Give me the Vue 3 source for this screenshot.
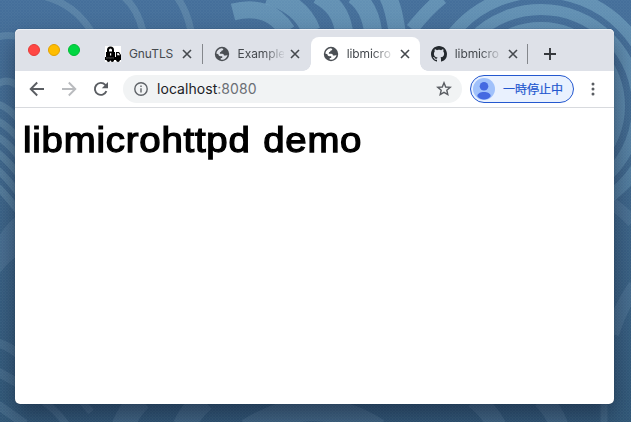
<script setup>
const tabs = [
  { title: 'GnuTLS', icon: 'truck', active: false, separator: true, fade: false },
  { title: 'Example', icon: 'globe', active: false, separator: false, fade: true },
  { title: 'libmicro', icon: 'globe', active: true, separator: false, fade: true },
  { title: 'libmicro', icon: 'github', active: false, separator: true, fade: true },
]
const lights = ['red', 'yellow', 'green']
</script>

<template>
  <div class="desktop">
    <svg class="wallpaper" width="631" height="422" viewBox="0 0 631 422">
      <defs>
        <linearGradient id="sea" x1="0" y1="0" x2="0" y2="1">
          <stop offset="0" stop-color="#456f9b" />
          <stop offset="0.3" stop-color="#41698f" />
          <stop offset="1" stop-color="#315777" />
        </linearGradient>
        <linearGradient id="foam" gradientUnits="userSpaceOnUse" x1="0" y1="0" x2="0" y2="180">
          <stop offset="0" stop-color="#7fb0cb" stop-opacity=".52" />
          <stop offset="1" stop-color="#7fb0cb" stop-opacity=".3" />
        </linearGradient>
        <pattern id="weave" width="3" height="3" patternUnits="userSpaceOnUse">
          <path d="M0 .5H2M2.5 1V3" stroke="#b9d4e4" stroke-opacity=".05" fill="none" />
        </pattern>
      </defs>
      <rect width="631" height="422" fill="url(#sea)" />
      <g fill="none" stroke="url(#foam)">
        <circle cx="541" cy="106" r="63" stroke-width="42" />
        <circle cx="541" cy="106" r="96.5" stroke-width="11" />
        <circle cx="541" cy="106" r="114" stroke-width="12" />
        <path d="M412 29Q428 9 442 -2" stroke-width="13" />
        <path d="M233 12C256 6 275 12 287 31" stroke-width="17" />
        <path d="M268 -5C291 2 305 14 311 31" stroke-width="19" />
        <path d="M318 -5C334 4 341 14 344 31" stroke-width="18" />
        <path d="M354 -5C366 4 371 16 373 31" stroke-width="18" />
        <path d="M387 -5C393 6 395 18 397 31" stroke-width="17" />
      </g>
      <g fill="none" stroke="#89afc5" stroke-opacity=".3" stroke-width="7">
        <path d="M46 -3Q75 5 91 31" />
        <path d="M124 -3Q137 8 143 31" />
        <path d="M177 -3Q187 11 191 31" />
        <path d="M-2 37Q8 34 19 37" />
        <path d="M-2 84Q8 77 19 87" />
        <path d="M-2 104Q8 107 19 120" />
        <path d="M-2 121Q8 126 19 139" />
        <path d="M-2 137Q8 143 19 157" />
        <path d="M-2 153Q8 161 19 175" />
        <path d="M-2 170Q8 179 19 194" />
        <path d="M-2 187Q8 197 19 212" />
      </g>
      <g fill="none" stroke="#7698b2" stroke-opacity=".24">
        <path d="M-2 238Q7 222 19 215V255Q8 261-2 276Z" fill="#7698b2" fill-opacity=".24" stroke="none" />
        <path d="M-2 343Q9 346 19 355M-2 372Q9 378 19 384M-2 405L25 424" stroke-width="9" />
        <path d="M44 402Q56 410 66 424M79 398L91 412" stroke-width="7" />
        <path d="M141 399Q130 409 123 426M204 400Q191 411 184 426" stroke-width="23" />
        <path d="M248 430Q313 389 378 430" stroke-width="23" />
        <path d="M474 399Q488 409 497 426M542 399Q554 411 559 426" stroke-width="19" />
        <path d="M604 399V424" stroke-width="7" />
        <path d="M612 204Q622 210 633 222" stroke-width="12" />
        <path d="M612 334Q620 308 635 286" stroke-width="14" />
      </g>
      <rect width="631" height="422" fill="url(#weave)" />
    </svg>

    <main class="window">
      <header class="tabstrip">
        <div class="lights">
          <span v-for="light in lights" :key="light" class="light" :class="light"></span>
        </div>
        <div class="tabs">
          <div v-for="(tab, i) in tabs" :key="i" class="tab" :class="{ active: tab.active, separated: tab.separator }">
            <svg v-if="tab.icon === 'truck'" class="favicon" viewBox="0 0 16 16">
              <path fill="#fff" d="M0 0h16v16H0z" />
              <path d="M1 6h9v5H1zM2 6V4a3.5 3.5 0 0 1 7 0v2" fill="#000" />
              <path d="M4 5.4V4a1.5 1.5 0 0 1 3 0v1.4z" fill="#fff" />
              <path d="M0 11h11V6h3l2 3v5H0z" />
              <path d="M12.2 7h1.2L15 9.3h-2.8zM5 7.2h1.2v2.4H5z" fill="#fff" />
              <path d="M1 12h8" stroke="#777" stroke-width=".7" />
              <circle cx="3.5" cy="14.2" r="1.7" /><circle cx="7.3" cy="14.2" r="1.7" /><circle cx="13" cy="14.2" r="1.7" />
            </svg>
            <svg v-else-if="tab.icon === 'globe'" class="favicon" viewBox="0 0 16 16">
              <circle cx="8" cy="8" r="7.2" fill="#4b4f54" />
              <path d="M2.3 7.6C2.6 4.7 4.9 2.5 7.8 2.3L9.4 3Q9.3 4.5 7.5 4.8 7.6 6.2 6 6.3L5.8 7.7H8.4Q10 7.9 10 9.4H11.8Q13 9.3 13.5 8.7C13.2 11.6 10.9 13.7 8 13.8L6.7 13.6V12H8.2V10.2H6.3Q4.6 10.2 4.3 8.2Z" :fill="tab.active ? '#fff' : '#dee1e8'" />
            </svg>
            <svg v-else class="favicon" viewBox="0 0 16 16">
              <path fill="#24292e" fill-rule="evenodd" d="M8 0C3.58 0 0 3.58 0 8c0 3.54 2.29 6.53 5.47 7.59.4.07.55-.17.55-.38 0-.19-.01-.82-.01-1.49-2.01.37-2.53-.49-2.69-.94-.09-.23-.48-.94-.82-1.13-.28-.15-.68-.52-.01-.53.63-.01 1.08.58 1.23.82.72 1.21 1.87.87 2.33.66.07-.52.28-.87.51-1.07-1.78-.2-3.64-.89-3.64-3.95 0-.87.31-1.59.82-2.15-.08-.2-.36-1.02.08-2.12 0 0 .67-.21 2.2.82.64-.18 1.32-.27 2-.27s1.36.09 2 .27c1.53-1.04 2.2-.82 2.2-.82.44 1.1.16 1.92.08 2.12.51.56.82 1.27.82 2.15 0 3.07-1.87 3.75-3.65 3.95.29.25.54.73.54 1.48 0 1.07-.01 1.93-.01 2.2 0 .21.15.46.55.38A8.01 8.01 0 0 0 16 8c0-4.42-3.58-8-8-8z" />
            </svg>
            <span class="title" :class="{ fade: tab.fade }">{{ tab.title }}</span>
            <svg class="close" viewBox="0 0 10 10"><path d="M1 1l8 8M9 1L1 9" /></svg>
          </div>
        </div>
        <svg class="plus" viewBox="0 0 12 12"><path d="M6 0v12M0 6h12" /></svg>
      </header>

      <nav class="toolbar">
        <svg class="nav" viewBox="0 0 16 16"><path d="M15 8H2M8.2 1.5L1.7 8l6.5 6.5" /></svg>
        <svg class="nav disabled" viewBox="0 0 16 16"><path d="M1 8h13M7.8 1.5L14.3 8l-6.5 6.5" /></svg>
        <svg class="nav" viewBox="0 0 16 16">
          <path d="M13.4 10.2A6 6 0 1 1 12.3 3.8L14 5.5" />
          <path class="solid" d="M15 1v6.2H8.8z" />
        </svg>
        <div class="omnibox">
          <svg class="info" viewBox="0 0 14 14">
            <circle cx="7" cy="7" r="6.2" /><path d="M7 6.2v4.3M7 3.5V5" />
          </svg>
          <span class="url">localhost<span class="port">:8080</span></span>
          <svg class="star" viewBox="0 0 16 16">
            <path d="M8 1.8l1.7 4.2 4.5.3-3.4 2.9 1 4.4L8 11.3l-3.8 2.3 1-4.4-3.4-2.9 4.5-.3z" />
          </svg>
        </div>
        <div class="profile">
          <svg class="avatar" viewBox="0 0 22 22">
            <circle cx="11" cy="11" r="11" fill="#a0c1fb" />
            <circle cx="11" cy="8.3" r="4.3" fill="#4469e1" />
            <path d="M4.3 18.2C4.3 12.6 17.7 12.6 17.7 18.2Q15 21.5 11 21.5T4.3 18.2Z" fill="#4469e1" />
          </svg>
          <span class="status">一時停止中</span>
        </div>
        <svg class="menu" viewBox="0 0 4 14">
          <circle cx="2" cy="2" r="1.5" /><circle cx="2" cy="7" r="1.5" /><circle cx="2" cy="12" r="1.5" />
        </svg>
      </nav>

      <section class="page">
        <h1>libmicrohttpd demo</h1>
      </section>
    </main>
  </div>
</template>

<style>
body { margin: 0; overflow: hidden; }
</style>

<style scoped>
.desktop {
  position: relative;
  box-sizing: border-box;
  width: 631px;
  height: 422px;
  padding: 29px 17px 18px 15px;
  overflow: hidden;
  font-family: Inter, Roboto, "Noto Sans CJK JP", sans-serif;
}
.wallpaper { position: absolute; inset: 0; }
.window {
  position: relative;
  display: flex;
  flex-direction: column;
  height: 375px;
  border-radius: 5px;
  background: #fff;
  box-shadow: 0 12px 22px rgba(15, 25, 48, .5), 0 0 1px rgba(0, 0, 0, .45);
}
.tabstrip {
  display: flex;
  height: 42px;
  background: #dee1e8;
  border-radius: 5px 5px 0 0;
  box-shadow: inset 0 1px #eff1f5;
}
.lights { display: flex; gap: 8px; width: 66px; padding: 15px 0 0 13px; }
.light { box-sizing: border-box; width: 12px; height: 12px; border-radius: 50%; }
.red { background: #ff4744; border: 1px solid #e53b39; }
.yellow { background: #ffbd00; border: 1px solid #e2a100; }
.green { background: #00d742; border: 1px solid #00bc34; }
.tabs { display: flex; padding-top: 8px; }
.tab {
  position: relative;
  box-sizing: border-box;
  display: flex;
  align-items: center;
  width: 108.6px;
  height: 34px;
  padding-left: 11px;
}
.active { background: #fff; border-radius: 8px 8px 0 0; }
.active .favicon { margin-left: .6px; margin-right: -.1px; }
.active::before,
.active::after {
  content: "";
  position: absolute;
  bottom: 0;
  width: 8px;
  height: 8px;
}
.active::before { left: -8px; background: radial-gradient(circle at 0 0, transparent 7.5px, #fff 8px); }
.active::after { right: -8px; background: radial-gradient(circle at 100% 0, transparent 7.5px, #fff 8px); }
.separated::after {
  content: "";
  position: absolute;
  right: 0;
  top: 7px;
  width: 1px;
  height: 20px;
  background: #84878c;
}
.favicon { flex: none; width: 16px; height: 16px; }
.title {
  width: 46px;
  margin-left: 8px;
  white-space: nowrap;
  font-size: 12px;
  line-height: 16px;
  letter-spacing: -.1px;
  color: #45494e;
}
.fade { mask-image: linear-gradient(to right, #000 55%, transparent 104%); }
.close { flex: none; width: 10px; height: 10px; margin-left: 6.9px; fill: none; stroke: #45494e; stroke-width: 1.6; }
.plus { width: 12px; height: 12px; margin: 19px 0 0 15.4px; fill: none; stroke: #35383c; stroke-width: 1.9; }
.toolbar {
  box-sizing: border-box;
  display: flex;
  align-items: center;
  height: 37px;
  padding-left: 14px;
  border-bottom: 1px solid #d8dade;
}
.nav { width: 16px; height: 16px; margin-right: 16px; fill: none; stroke: #5a5d62; stroke-width: 1.9; }
.nav .solid { fill: #5a5d62; stroke: none; }
.disabled { stroke: #b9bbbe; }
.omnibox {
  box-sizing: border-box;
  display: flex;
  align-items: center;
  width: 339px;
  height: 28px;
  margin-left: -2px;
  padding: 0 10px 0 11px;
  border-radius: 14px;
  background: #f1f3f4;
}
.info { width: 14px; height: 14px; fill: none; stroke: #5f6368; stroke-width: 1.4; }
.url { flex: 1; margin-left: 9px; font-size: 14px; line-height: 20px; letter-spacing: .05px; color: #202124; }
.port { color: #6b6f74; }
.star { width: 16px; height: 16px; fill: none; stroke: #5a5d62; stroke-width: 1.4; }
.profile {
  box-sizing: border-box;
  display: flex;
  align-items: center;
  width: 104px;
  height: 28px;
  margin-left: 8px;
  padding-left: 2px;
  border: 1px solid #2458cf;
  border-radius: 14px;
  background: #e9f1fe;
}
.avatar { width: 22px; height: 22px; }
.status {
  margin-left: 8px;
  font-family: "Noto Sans CJK JP", sans-serif;
  font-size: 12px;
  line-height: 18px;
  white-space: nowrap;
  color: #2458cf;
  -webkit-text-stroke: .2px #2458cf;
}
.menu { width: 4px; height: 14px; margin-left: 16.5px; fill: #5a5d62; }
.page { padding: 12px 8px; }
h1 {
  margin: 0;
  font-family: "Liberation Sans", sans-serif;
  font-size: 34.5px;
  font-weight: 400;
  line-height: 41px;
  letter-spacing: .7px;
  word-spacing: 1px;
  white-space: nowrap;
  color: #000;
  -webkit-text-stroke: 1.25px #000;
  transform: scaleX(1.112);
  transform-origin: left;
}
</style>
